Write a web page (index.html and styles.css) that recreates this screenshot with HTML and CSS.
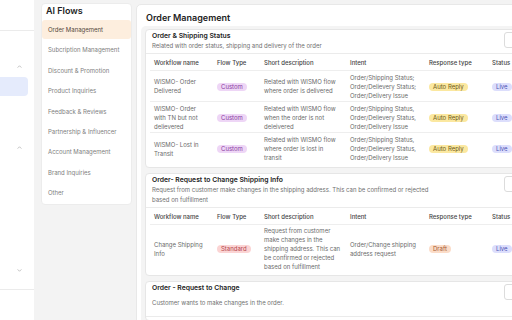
FILE: index.html
```html
<!DOCTYPE html>
<html lang="en">
<head>
    <meta charset="UTF-8">
    <meta name="viewport" content="width=device-width, initial-scale=1.0">
    <title>AI Flows | Order Management</title>
    <link rel="stylesheet" href="styles.css">
</head>
<body>
    <div class="app">
        <nav class="rail">
            <div class="rail-head"></div>
            <div class="rail-toggle first">
                <svg viewBox="0 0 6 4" width="5" height="3"><path d="M0.5 3.5 L3 1 L5.5 3.5" /></svg>
            </div>
            <div class="rail-item active"></div>
            <div class="rail-toggle second">
                <svg viewBox="0 0 6 4" width="5" height="3"><path d="M0.5 3.5 L3 1 L5.5 3.5" /></svg>
            </div>
            <div class="rail-toggle third">
                <svg viewBox="0 0 6 4" width="5" height="3"><path d="M0.5 0.5 L3 3 L5.5 0.5" /></svg>
            </div>
            <div class="rail-foot"></div>
        </nav>

        <aside class="flows">
            <h3>AI Flows</h3>
            <ul>
                <li class="active">Order Management</li>
                <li>Subcription Management</li>
                <li>Discount &amp; Promotion</li>
                <li>Product Inquiries</li>
                <li>Feedback &amp; Reviews</li>
                <li>Partnership &amp; Influencer</li>
                <li>Account Management</li>
                <li>Brand Inquiries</li>
                <li>Other</li>
            </ul>
        </aside>

        <main class="main">
            <h2>Order Management</h2>
            <div class="sections">
                <section class="card">
                    <div class="card-head">
                        <div>
                            <h4>Order &amp; Shipping Status</h4>
                            <p>Related with order status, shipping and delivery of the order</p>
                        </div>
                        <span class="card-btn"></span>
                    </div>
                    <div class="table">
                        <div class="row head">
                            <div>Workflow name</div>
                            <div>Flow Type</div>
                            <div>Short description</div>
                            <div>Intent</div>
                            <div>Response type</div>
                            <div>Status</div>
                        </div>
                        <div class="row">
                            <div>WISMO- Order Delivered</div>
                            <div><span class="badge custom">Custom</span></div>
                            <div>Related with WISMO flow where order is delivered</div>
                            <div>Order/Shipping Status; Order/Delievery Status; Order/Delivery Issue</div>
                            <div><span class="badge auto">Auto Reply</span></div>
                            <div><span class="badge live">Live</span></div>
                        </div>
                        <div class="row">
                            <div>WISMO- Order with TN but not delievered</div>
                            <div><span class="badge custom">Custom</span></div>
                            <div>Related with WISMO flow when the order is not deleivered</div>
                            <div>Order/Shipping Status, Order/Delievery Status, Order/Delivery Issue</div>
                            <div><span class="badge auto">Auto Reply</span></div>
                            <div><span class="badge live">Live</span></div>
                        </div>
                        <div class="row">
                            <div>WISMO- Lost in Transit</div>
                            <div><span class="badge custom">Custom</span></div>
                            <div>Related with WISMO flow where order is lost in transit</div>
                            <div>Order/Shipping Status, Order/Delievery Status, Order/Delivery Issue</div>
                            <div><span class="badge auto">Auto Reply</span></div>
                            <div><span class="badge live">Live</span></div>
                        </div>
                    </div>
                </section>

                <section class="card">
                    <div class="card-head">
                        <div>
                            <h4>Order- Request to Change Shipping Info</h4>
                            <p>Request from customer make changes in the shipping address. This can be confirmed or rejected based on fulfillment</p>
                        </div>
                        <span class="card-btn"></span>
                    </div>
                    <div class="table">
                        <div class="row head">
                            <div>Workflow name</div>
                            <div>Flow Type</div>
                            <div>Short description</div>
                            <div>Intent</div>
                            <div>Response type</div>
                            <div>Status</div>
                        </div>
                        <div class="row">
                            <div>Change Shipping Info</div>
                            <div><span class="badge standard">Standard</span></div>
                            <div>Request from customer make changes in the shipping address. This can be confirmed or rejected based on fulfillment</div>
                            <div>Order/Change shipping address request</div>
                            <div><span class="badge draft">Draft</span></div>
                            <div><span class="badge live">Live</span></div>
                        </div>
                    </div>
                </section>

                <section class="card">
                    <div class="card-head spaced">
                        <div>
                            <h4>Order - Request to Change</h4>
                            <p>Customer wants to make changes in the order.</p>
                        </div>
                        <span class="card-btn"></span>
                    </div>
                </section>
            </div>
        </main>
    </div>
</body>
</html>
```

FILE: styles.css
```css
:root {
    --page-bg: #f3f3f3;
    --line: #ebebeb;
    --text-dark: #222;
    --text-soft: #6b6b6b;
}

* {
    margin: 0;
    padding: 0;
    box-sizing: border-box;
}

body {
    width: 512px;
    height: 320px;
    overflow: hidden;
    background: var(--page-bg);
    font-family: Inter, 'Noto Sans', sans-serif;
    color: var(--text-soft);
}

.app {
    display: flex;
    align-items: flex-start;
    height: 320px;
}

/* left rail */
.rail {
    width: 34px;
    height: 320px;
    flex-shrink: 0;
    background: white;
    display: flex;
    flex-direction: column;
}

.rail-head {
    height: 31px;
    border-bottom: 1px solid var(--line);
}

.rail-toggle {
    height: 10px;
    display: flex;
    align-items: center;
    justify-content: flex-end;
    padding-right: 12px;
}

.rail-toggle svg path {
    fill: none;
    stroke: #9a9a9a;
    stroke-width: 0.8;
}

.rail-toggle.first { margin-top: 30px; }
.rail-toggle.second { margin-top: 46px; }
.rail-toggle.third { margin-top: 113px; }

.rail-item.active {
    margin-top: 6px;
    width: 28px;
    height: 19px;
    background: #e5ebfc;
    border-radius: 0 4px 4px 0;
}

.rail-foot {
    margin-top: 14px;
    border-top: 1px solid var(--line);
}

/* flows list */
.flows {
    width: 91px;
    flex-shrink: 0;
    margin: 3px 0 0 7px;
    height: 202px;
    background: white;
    border: 1px solid #ececec;
    border-radius: 4px;
    overflow: hidden;
}

.flows h3 {
    font-size: 9px;
    font-weight: 600;
    line-height: 12px;
    color: var(--text-dark);
    padding: 1px 4px 3px;
}

.flows ul {
    list-style: none;
}

.flows li {
    font-size: 6px;
    line-height: 20.4px;
    padding-left: 6px;
    color: #808080;
    white-space: nowrap;
}

.flows li.active {
    background: #fdeede;
    color: #55483c;
    border-radius: 3px;
    line-height: 19px;
    margin-bottom: 1.4px;
}

/* main panel */
.main {
    width: 406px;
    flex-shrink: 0;
    height: 320px;
    margin: 4px 0 0 4px;
    background: white;
    border: 1px solid #e8e8e8;
    border-radius: 5px 0 0 0;
    padding: 7px 4px 0;
}

.main h2 {
    font-size: 9px;
    font-weight: 600;
    line-height: 12px;
    color: var(--text-dark);
    padding-left: 5px;
    margin-bottom: 2px;
}

.sections {
    background: #f4f4f4;
    border-radius: 5px;
    padding: 3px 4px;
    display: flex;
    flex-direction: column;
    gap: 5px;
}

.card {
    background: white;
    border: 1px solid #e6e6e6;
    border-radius: 4px;
    padding-bottom: 3px;
}

.card-head {
    display: flex;
    justify-content: space-between;
    align-items: flex-start;
    padding: 1px 6px 2px 6px;
    border-bottom: 1px solid var(--line);
}

.card-head h4 {
    font-size: 6.8px;
    font-weight: 600;
    line-height: 9px;
    color: var(--text-dark);
}

.card-head p {
    font-size: 6px;
    line-height: 10px;
    margin-top: 1px;
    max-width: 280px;
    color: #707070;
}

.card-head.spaced p {
    margin-top: 6px;
    padding-bottom: 6px;
}

.card-btn {
    width: 22px;
    height: 16px;
    margin-top: 1px;
    border: 1px solid #dcdcdc;
    border-radius: 3px;
    flex-shrink: 0;
}

/* tables */
.table {
    margin: 0 4px;
}

.row {
    display: grid;
    grid-template-columns: 63px 47px 86px 79px 63px 1fr;
    align-items: center;
    min-height: 31px;
    padding: 1px 0;
    border-bottom: 1px solid #eeeeee;
    font-size: 6px;
    line-height: 9px;
}

.row:last-child {
    border-bottom: none;
}

.row > div {
    padding: 0 4px;
}

.row.head {
    min-height: 17px;
    font-weight: 500;
    color: #444;
    border-bottom: 1px solid #eeeeee;
}

.badge {
    display: inline-block;
    font-size: 6px;
    line-height: 8px;
    padding: 0 4px;
    border-radius: 4px;
    white-space: nowrap;
}

.badge.custom { background: #eed6f6; color: #8a3c9e; }
.badge.auto { background: #fbe8a0; color: #6b5817; }
.badge.live { background: #dcdefc; color: #4c52b3; }
.badge.standard { background: #fbd4d4; color: #b4454b; }
.badge.draft { background: #fbdcc8; color: #a45a31; }
```
